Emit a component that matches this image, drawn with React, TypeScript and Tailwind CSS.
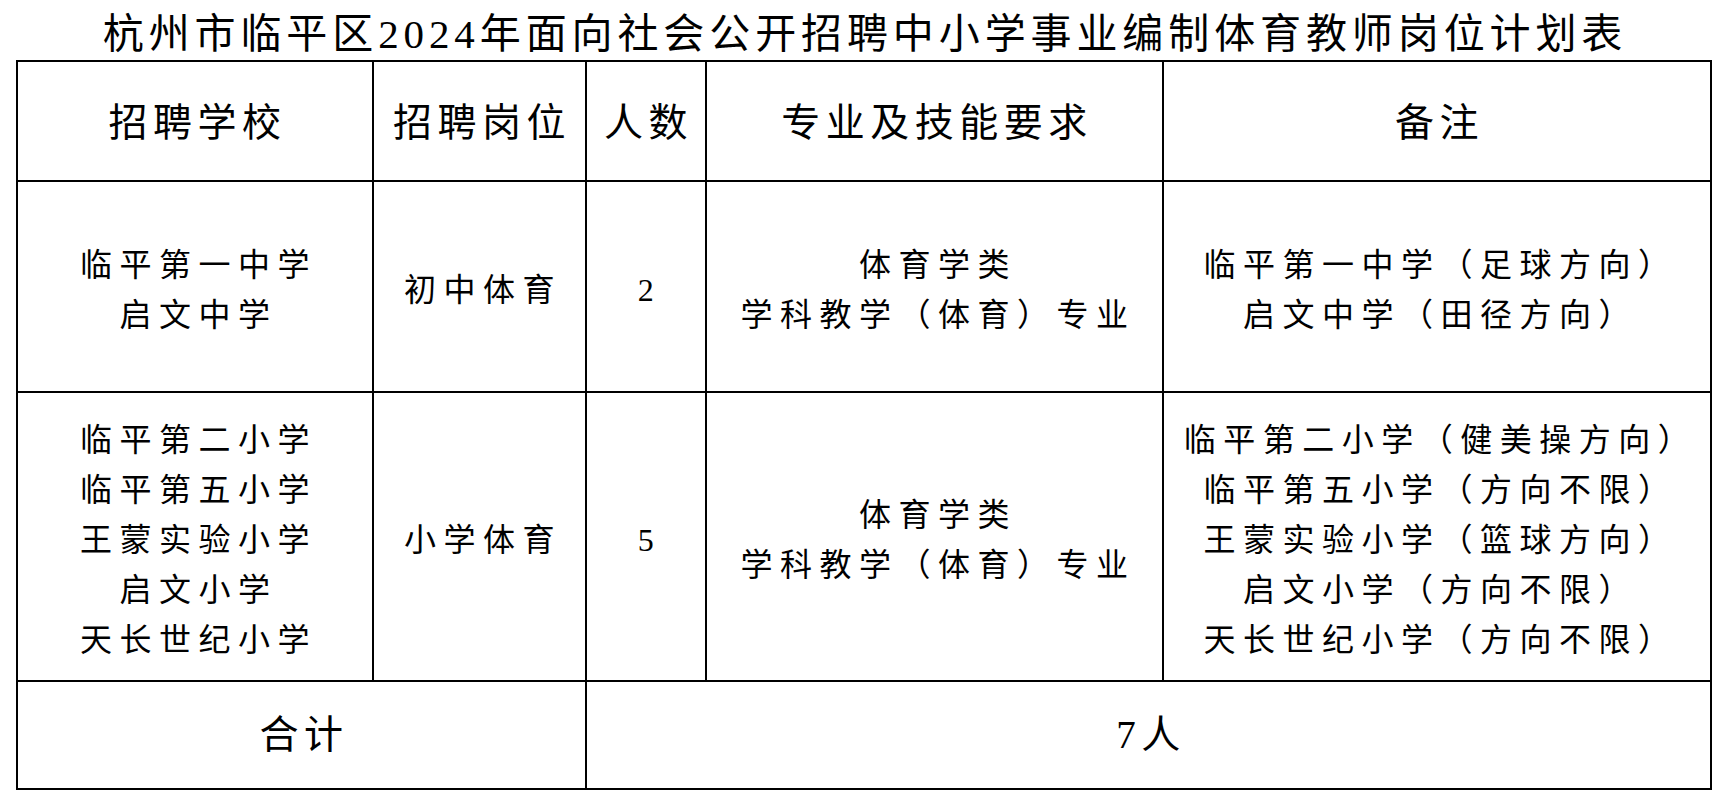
import React from "react";

const F = "font-['Liberation_Serif','Noto_Sans_CJK_SC',serif]";

function Lines({ lines }: { lines: string[] }) {
  return (
    <div className="flex flex-col items-center">
      {lines.map((l, i) => (
        <div key={i} className="leading-[50px] whitespace-nowrap">
          {l}
        </div>
      ))}
    </div>
  );
}

export default function App() {
  const th =
    "border-2 border-black text-center align-middle text-[39px] tracking-[5.5px] pl-[5px] font-normal";
  const thh = th + " pt-[4px]";
  const td =
    "border-2 border-black text-center align-middle text-[32px] tracking-[7.5px] pl-[7px] pt-[6px]";
  return (
    <div className={`w-[1726px] h-[804px] bg-white text-black ${F}`}>
      <div className="h-[60px] flex items-center justify-center pt-[10px] text-[41px] tracking-[4.9px] pl-[4px] whitespace-nowrap">
        杭州市临平区2024年面向社会公开招聘中小学事业编制体育教师岗位计划表
      </div>
      <div className="pl-[16px]">
        <table className="border-collapse w-[1694px] table-fixed">
          <colgroup>
            <col className="w-[356px]" />
            <col className="w-[213px]" />
            <col className="w-[120px]" />
            <col className="w-[457px]" />
            <col className="w-[548px]" />
          </colgroup>
          <tbody>
            <tr className="h-[120px]">
              <th className={thh}>招聘学校</th>
              <th className={thh}>招聘岗位</th>
              <th className={thh}>人数</th>
              <th className={thh}>专业及技能要求</th>
              <th className={thh}>备注</th>
            </tr>
            <tr className="h-[211px]">
              <td className={td}>
                <Lines lines={["临平第一中学", "启文中学"]} />
              </td>
              <td className={td}>初中体育</td>
              <td className={td}>2</td>
              <td className={td}>
                <Lines lines={["体育学类", "学科教学（体育）专业"]} />
              </td>
              <td className={td}>
                <Lines
                  lines={["临平第一中学（足球方向）", "启文中学（田径方向）"]}
                />
              </td>
            </tr>
            <tr className="h-[289px]">
              <td className={td}>
                <Lines
                  lines={[
                    "临平第二小学",
                    "临平第五小学",
                    "王蒙实验小学",
                    "启文小学",
                    "天长世纪小学",
                  ]}
                />
              </td>
              <td className={td}>小学体育</td>
              <td className={td}>5</td>
              <td className={td}>
                <Lines lines={["体育学类", "学科教学（体育）专业"]} />
              </td>
              <td className={td}>
                <Lines
                  lines={[
                    "临平第二小学（健美操方向）",
                    "临平第五小学（方向不限）",
                    "王蒙实验小学（篮球方向）",
                    "启文小学（方向不限）",
                    "天长世纪小学（方向不限）",
                  ]}
                />
              </td>
            </tr>
            <tr className="h-[108px]">
              <td colSpan={2} className={th}>
                合计
              </td>
              <td colSpan={3} className={th}>
                7人
              </td>
            </tr>
          </tbody>
        </table>
      </div>
    </div>
  );
}
